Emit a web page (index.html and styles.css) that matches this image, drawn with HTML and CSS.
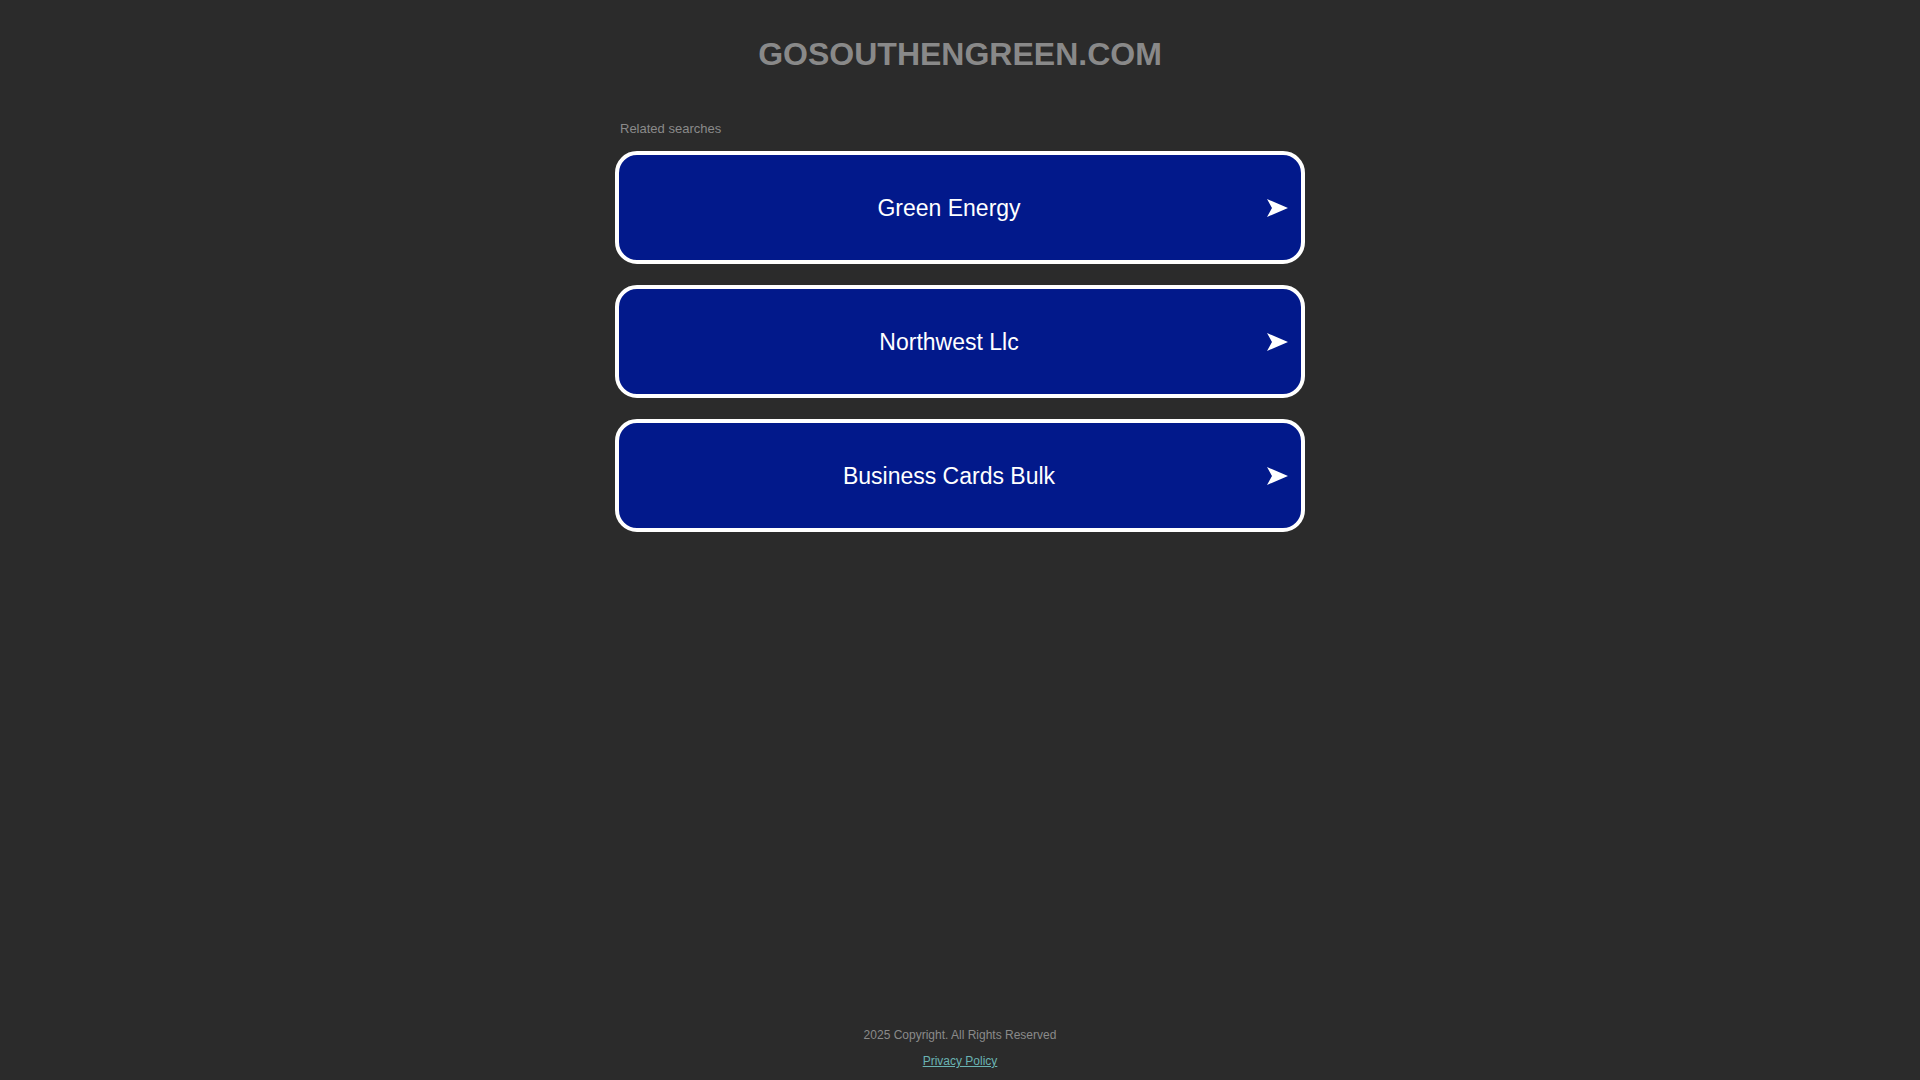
FILE: index.html
```html
<!DOCTYPE html>
<html lang="en">
<head>
<meta charset="utf-8">
<title>gosouthengreen.com</title>
<link rel="stylesheet" href="styles.css">
</head>
<body>
<div class="page">
  <header class="header">
    <h1 class="domain">GOSOUTHENGREEN.COM</h1>
  </header>
  <main class="main">
    <div class="related">
      <p class="related-title">Related searches</p>
      <ul class="links">
        <li><a class="link" href="#"><span class="label">Green Energy</span><svg class="arrow" viewBox="0 0 21 18" width="21" height="18"><path d="M0 0 L21 9 L0 18 L5 9 Z" fill="#fff"/></svg></a></li>
        <li><a class="link" href="#"><span class="label">Northwest Llc</span><svg class="arrow" viewBox="0 0 21 18" width="21" height="18"><path d="M0 0 L21 9 L0 18 L5 9 Z" fill="#fff"/></svg></a></li>
        <li><a class="link" href="#"><span class="label">Business Cards Bulk</span><svg class="arrow" viewBox="0 0 21 18" width="21" height="18"><path d="M0 0 L21 9 L0 18 L5 9 Z" fill="#fff"/></svg></a></li>
      </ul>
    </div>
  </main>
  <footer class="footer">
    <p class="copyright">2025 Copyright. All Rights Reserved</p>
    <a class="privacy" href="#">Privacy Policy</a>
  </footer>
</div>
</body>
</html>
```
FILE: styles.css
```css
html, body {
  margin: 0;
  padding: 0;
  height: 100%;
}
body {
  background: #2b2b2b;
  font-family: "Liberation Sans", Arial, sans-serif;
}
.page {
  min-height: 100vh;
  display: flex;
  flex-direction: column;
  box-sizing: border-box;
}
.header {
  padding-top: 36px;
  text-align: center;
}
.domain {
  margin: 0;
  font-size: 32px;
  line-height: 37px;
  font-weight: bold;
  color: #898989;
}
.main {
  flex: 1;
  display: flex;
  justify-content: center;
  padding-top: 48px;
}
.related {
  width: 690px;
}
.related-title {
  margin: 0 0 15px 5px;
  font-size: 13px;
  line-height: 15px;
  color: #8a8a8a;
}
.links {
  list-style: none;
  margin: 0;
  padding: 0;
  display: flex;
  flex-direction: column;
  gap: 21px;
}
.link {
  position: relative;
  display: flex;
  align-items: center;
  justify-content: center;
  height: 113px;
  box-sizing: border-box;
  border: 4px solid #ffffff;
  border-radius: 22px;
  background: #02198b;
  color: #ffffff;
  text-decoration: none;
  padding-right: 22px;
}
.label {
  font-size: 23px;
  line-height: 27px;
  padding-top: 2px;
}
.arrow {
  position: absolute;
  right: 13px;
  top: 50%;
  margin-top: -9px;
}
.footer {
  text-align: center;
  padding-bottom: 11px;
}
.copyright {
  margin: 0 0 9px;
  font-size: 12px;
  line-height: 14px;
  color: #8a8a8a;
}
.privacy {
  display: inline-block;
  font-size: 12px;
  line-height: 14px;
  color: #6ab3b3;
  text-decoration: underline;
}
```
